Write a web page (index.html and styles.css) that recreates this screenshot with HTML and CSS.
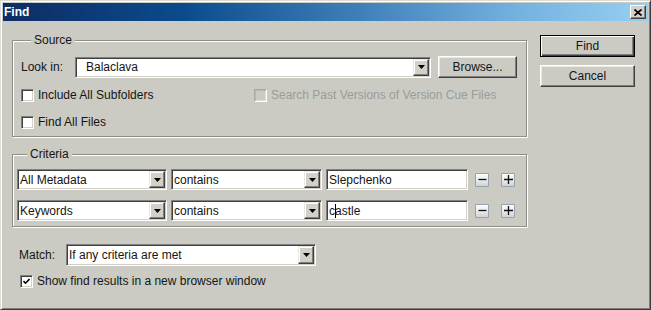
FILE: index.html
```html
<!DOCTYPE html>
<html>
<head>
  <meta charset="utf-8">
  <title>Find</title>
  <link rel="stylesheet" href="styles.css">
</head>
<body>

<div class="window">
  <div class="titlebar">
    <span class="title">Find</span>
    <span class="close">
      <svg width="8" height="7" viewBox="0 0 8 7"><path d="M0.5 0.5L7.5 6.5M7.5 0.5L0.5 6.5" stroke="#000" stroke-width="1.7" fill="none"/></svg>
    </span>
  </div>

  <div class="content">
    <div class="main">
      <fieldset class="group source">
        <legend>Source</legend>
        <div class="look-row">
          <span class="label">Look in:</span>
          <div class="combo combo-look">
            <span class="combo-text">Balaclava</span>
            <span class="drop"><svg width="7" height="4" viewBox="0 0 7 4"><polygon points="0,0 7,0 3.5,4" fill="#000"/></svg></span>
          </div>
          <button class="btn browse">Browse...</button>
        </div>
        <div class="check-row first">
          <label class="check"><span class="box"></span>Include All Subfolders</label>
          <label class="check disabled"><span class="box"></span>Search Past Versions of Version Cue Files</label>
        </div>
        <div class="check-row second">
          <label class="check"><span class="box"></span>Find All Files</label>
        </div>
      </fieldset>

      <fieldset class="group criteria">
        <legend>Criteria</legend>
        <div class="crit-row">
          <div class="combo c-field">
            <span class="combo-text">All Metadata</span>
            <span class="drop"><svg width="7" height="4" viewBox="0 0 7 4"><polygon points="0,0 7,0 3.5,4" fill="#000"/></svg></span>
          </div>
          <div class="combo c-op">
            <span class="combo-text">contains</span>
            <span class="drop"><svg width="7" height="4" viewBox="0 0 7 4"><polygon points="0,0 7,0 3.5,4" fill="#000"/></svg></span>
          </div>
          <div class="combo c-value"><span class="combo-text">Slepchenko</span></div>
          <span class="pm minus"><svg width="9" height="9" viewBox="0 0 9 9"><path d="M0.5 4.5H8.5" stroke="#111" stroke-width="1.3"/></svg></span>
          <span class="pm plus"><svg width="9" height="9" viewBox="0 0 9 9"><path d="M0 4.5H9M4.5 0V9" stroke="#111" stroke-width="1.3"/></svg></span>
        </div>
        <div class="crit-row second">
          <div class="combo c-field">
            <span class="combo-text">Keywords</span>
            <span class="drop"><svg width="7" height="4" viewBox="0 0 7 4"><polygon points="0,0 7,0 3.5,4" fill="#000"/></svg></span>
          </div>
          <div class="combo c-op">
            <span class="combo-text">contains</span>
            <span class="drop"><svg width="7" height="4" viewBox="0 0 7 4"><polygon points="0,0 7,0 3.5,4" fill="#000"/></svg></span>
          </div>
          <div class="combo c-value"><span class="combo-text">c<span class="caret"></span>astle</span></div>
          <span class="pm minus"><svg width="9" height="9" viewBox="0 0 9 9"><path d="M0.5 4.5H8.5" stroke="#111" stroke-width="1.3"/></svg></span>
          <span class="pm plus"><svg width="9" height="9" viewBox="0 0 9 9"><path d="M0 4.5H9M4.5 0V9" stroke="#111" stroke-width="1.3"/></svg></span>
        </div>
      </fieldset>

      <div class="match-row">
        <span class="match-label">Match:</span>
        <div class="combo c-match">
          <span class="combo-text">If any criteria are met</span>
          <span class="drop"><svg width="7" height="4" viewBox="0 0 7 4"><polygon points="0,0 7,0 3.5,4" fill="#000"/></svg></span>
        </div>
      </div>

      <div class="show-row">
        <label class="check"><span class="box"><svg width="7" height="7" viewBox="0 0 7 7"><polyline points="0.5,3 2.5,5.2 6.5,1" stroke="#000" stroke-width="1.6" fill="none"/></svg></span>Show find results in a new browser window</label>
      </div>
    </div>

    <div class="side">
      <button class="btn default">Find</button>
      <button class="btn">Cancel</button>
    </div>
  </div>
</div>

</body>
</html>
```

FILE: styles.css
```css
* {
  box-sizing: border-box;
}
html, body {
  margin: 0;
  padding: 0;
  font-family: 'Liberation Sans', Arial, sans-serif;
  font-size: 12px;
  color: #151515;
  background-color: #cbcbc4;
}
.window {
  width: 651px;
  height: 310px;
  padding: 2px;
  background: #cbcbc4;
  border: 1px solid;
  border-color: #dcdcd6 #3a3d40 #3a3d40 #dcdcd6;
  box-shadow: inset 1px 1px #fff, inset -1px -1px #7e7e7a;
}
.titlebar {
  height: 18px;
  display: flex;
  align-items: center;
  justify-content: space-between;
  padding: 0 2px 0 1px;
  background: linear-gradient(to right, #0e2c64, #0a4b8c 28%, #3f7fb9 55%, #74b2e0 80%, #96cff0);
}
.title {
  color: #fff;
  font-weight: bold;
  font-family: 'Liberation Sans Narrow', 'Liberation Sans', sans-serif;
  font-size: 12px;
}
.close {
  width: 16px;
  height: 14px;
  display: flex;
  align-items: center;
  justify-content: center;
  background: #d4d0c8;
  border: 1px solid;
  border-color: #fff #404040 #404040 #fff;
  box-shadow: inset -1px -1px #808080;
}

.content {
  display: flex;
  padding-left: 9px;
}
.main {
  width: 515px;
}
.side {
  margin-left: 13px;
  padding-top: 14px;
  display: flex;
  flex-direction: column;
  gap: 8px;
}

/* group boxes */
.group {
  margin: 12px 0 0;
  min-width: 0;
  border: 1px solid #8e8e89;
  box-shadow: inset 1px 1px #fff, 1px 1px #fff;
}
.group legend {
  margin-left: 10px;
  padding: 0 3px;
  line-height: 14px;
  background: #cbcbc4;
}
.source {
  padding: 9px 8px 6px;
}
.criteria {
  margin-top: 10px;
  padding: 8px 4px 5px;
}

.look-row {
  display: flex;
  align-items: center;
  height: 22px;
}
.label {
  width: 54px;
}
.check-row {
  display: grid;
  grid-template-columns: 233px auto;
  align-items: center;
  height: 16px;
}
.check-row.first {
  margin-top: 9px;
}
.check-row.second {
  margin-top: 11px;
}
.check {
  display: flex;
  align-items: center;
  white-space: nowrap;
}
.box {
  width: 13px;
  height: 13px;
  margin-right: 4px;
  display: flex;
  align-items: center;
  justify-content: center;
  background: #fff;
  border: 1px solid;
  border-color: #808080 #fff #fff #808080;
  box-shadow: inset 1px 1px #404040, inset -1px -1px #d4d0c8;
}
.disabled {
  color: #9c9c98;
}
.disabled .box {
  background: #cbcbc4;
  border-color: #a8a8a4 #fff #fff #a8a8a4;
  box-shadow: inset 1px 1px #b8b8b4, inset -1px -1px #dcdcd8;
}

/* combo boxes and fields */
.combo {
  display: flex;
  height: 21px;
  padding: 1px;
  background: #fff;
  border: 1px solid;
  border-color: #808080 #fff #fff #808080;
  box-shadow: inset 1px 1px #404040, inset -1px -1px #d4d0c8;
}
.combo-text {
  flex: 1;
  display: flex;
  align-items: center;
  padding-left: 1px;
  white-space: nowrap;
  overflow: hidden;
}
.drop {
  width: 16px;
  display: flex;
  align-items: center;
  justify-content: center;
  background: #d4d0c8;
  border: 1px solid;
  border-color: #e8e8e4 #404040 #404040 #e8e8e4;
  box-shadow: inset -1px -1px #808080, inset 1px 1px #fff;
}
.combo-look {
  width: 356px;
}
.combo-look .combo-text {
  padding-left: 9px;
}
.caret {
  display: inline-block;
  width: 1px;
  height: 14px;
  margin-right: -1px;
  background: #000;
}

.crit-row {
  display: flex;
  align-items: center;
  height: 21px;
}
.crit-row.second {
  margin-top: 10px;
}
.c-field {
  width: 150px;
}
.c-op {
  width: 151px;
  margin-left: 4px;
}
.c-value {
  width: 142px;
  margin-left: 4px;
}
.pm {
  width: 14px;
  height: 14px;
  margin-left: 7px;
  display: flex;
  align-items: center;
  justify-content: center;
  border: 1px solid #97a2ad;
  border-radius: 1px;
  background: linear-gradient(#fdfdfd, #e4e6e8 60%, #cfd3d6);
}
.pm.plus {
  margin-left: 12px;
}

.match-row {
  display: flex;
  align-items: center;
  height: 22px;
  margin-top: 17px;
  padding-left: 7px;
}
.match-label {
  width: 47px;
}
.c-match {
  width: 250px;
  height: 22px;
}
.show-row {
  margin-top: 8px;
  padding-left: 8px;
}

/* buttons */
.btn {
  padding: 0;
  font: inherit;
  color: #151515;
  background: #cbcbc4;
  border: 1px solid;
  border-color: #fff #404040 #404040 #fff;
  box-shadow: inset -1px -1px #808080, inset 1px 1px #e8e8e4;
}
.browse {
  width: 79px;
  height: 22px;
  margin-left: 7px;
}
.side .btn {
  width: 95px;
  height: 22px;
}
.btn.default {
  border-color: #000;
  box-shadow: inset 1px 1px #fff, inset -1px -1px #404040, inset -2px -2px #808080;
}
```
